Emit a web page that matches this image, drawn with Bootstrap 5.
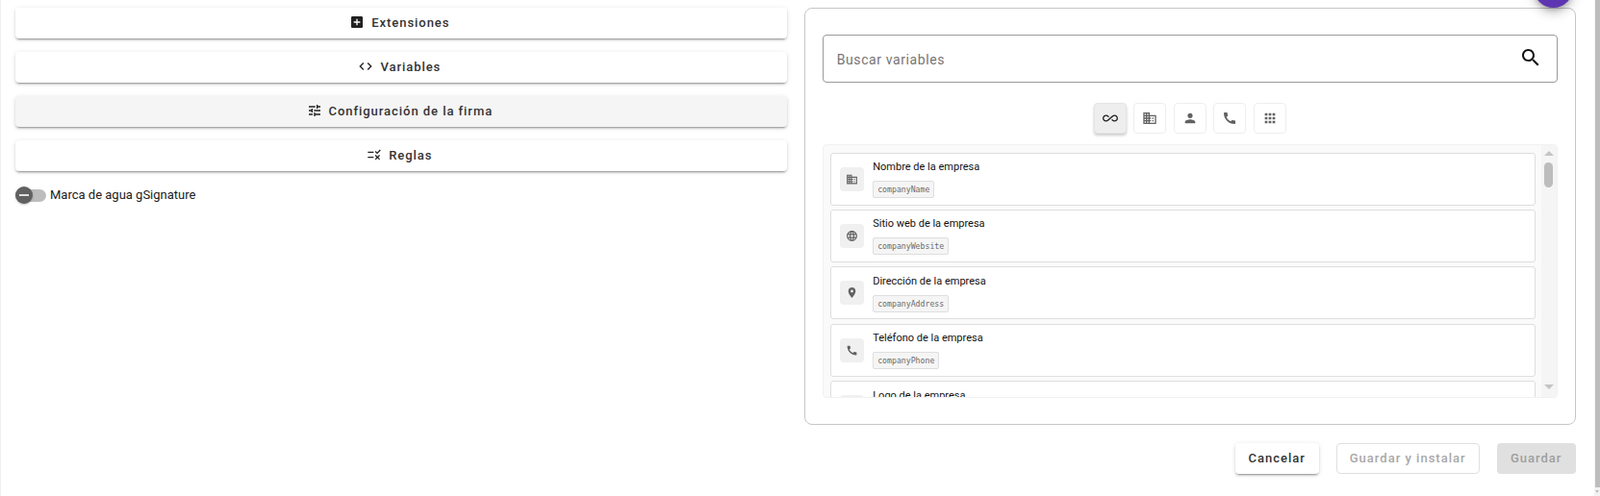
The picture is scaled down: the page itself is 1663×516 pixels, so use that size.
<!DOCTYPE html>
<html lang="es">
<head>
<meta charset="utf-8">
<title>Firma</title>
<link href="https://cdn.jsdelivr.net/npm/bootstrap@5.3.0/dist/css/bootstrap.min.css" rel="stylesheet">
<style>
html,body{height:516px;overflow:hidden;background:#fff;font-family:Roboto,"Liberation Sans",sans-serif;color:#212121}
.page-wrap{height:516px;position:relative;border-left:1px solid #f0f0f0}
.page-main{width:1655.7px;padding:8px 19px 0 15px;gap:18px}
.left-col{width:802px}
.right-col{width:802px}
.acc-btn{height:32px;margin-bottom:14px;width:100%;background:#fff;border:0;border-radius:4px;font-size:13px;font-weight:500;letter-spacing:.95px;color:#333;padding:0 3px 1px 0;box-shadow:0 3px 1px -2px rgba(0,0,0,.2),0 2px 2px 0 rgba(0,0,0,.14),0 1px 5px 0 rgba(0,0,0,.12)}
.acc-btn.is-active{background:#f5f5f5}
.acc-btn svg{width:16px;height:16px;fill:#212121;margin-right:7px;vertical-align:-3px}
.wm-row{margin-top:-2px;height:26px;gap:4px;font-size:13px;color:#212121}
.wm-switch{width:32px;height:13px;background:#bdbdbd;border-radius:7px;position:relative}
.wm-knob{position:absolute;left:0;top:-3px;width:18px;height:18px;border-radius:50%;background:#616161;box-shadow:0 1px 2px rgba(0,0,0,.25)}
.wm-knob::after{content:"";position:absolute;left:4px;top:8px;width:10px;height:2px;background:#e0e0e0}
.vars-panel{height:434px;border:1px solid #c6c6c6;border-radius:8px;padding:27px 18px 0 18.5px;background:#fff}
.search-box{height:50px;border:1px solid #9a9a9a;border-radius:4px;padding:0 14px 0 13.5px}
.search-box input{border:0;outline:0;flex:1;font-size:14px;letter-spacing:.6px;color:#212121;background:transparent;padding:2px 0 0;box-shadow:none}
.search-box input::placeholder{color:#757575;opacity:1}
.search-box svg{width:24px;height:24px;fill:#111;margin-right:1px;margin-top:-3px}
.type-row{margin-top:21px;gap:7.5px}
.type-btn{width:34px;height:32px;border:1px solid #eee;border-radius:4px;background:#fff;padding:0}
.type-btn svg{width:16px;height:16px;fill:#616161}
.type-btn.is-on{background:#eee;border-color:#e4e4e4;box-shadow:0 2px 3px rgba(0,0,0,.2)}
.type-btn.is-on svg{fill:#212121;width:16px;height:16px}
.var-list{margin-top:11px;height:264px;background:#fafafa;border:1px solid #f1f1f1;border-radius:4px;overflow:hidden}
.var-scroll{flex:1;padding:7.5px 7px 0 7px;overflow:hidden}
.var-item{height:55px;margin-bottom:4.4px;background:#fff;border:1px solid #dedede;border-radius:3px;padding:0 9px;gap:9px;width:732.5px}
.var-ico{width:25px;height:25px;border-radius:4px;background:#f0f0f0;flex:none}
.var-ico svg{width:13px;height:13px;fill:#616161}
.var-name{font-size:11px;line-height:14px;color:#111;margin-bottom:2px;margin-top:2px}
.var-key{display:inline-block;height:18px;line-height:16px;padding:0 4px;border:1px solid #dedede;border-radius:2px;background:#f5f5f5;color:#6b6b6b;font-family:"DejaVu Sans Mono","Liberation Mono",monospace;font-size:8.2px}
.list-bar{width:15.5px;background:#f5f5f5;flex:none;padding:6px 0 8px}
.bar-up{width:0;height:0;border-left:5px solid transparent;border-right:5px solid transparent;border-bottom:5px solid #c4c4c4}
.bar-thumb{width:9px;height:26px;background:#bdbdbd;border-radius:5px;margin-top:7px}
.bar-down{width:0;height:0;border-left:5px solid transparent;border-right:5px solid transparent;border-top:5px solid #c4c4c4;margin-top:auto}
.act-row{margin-top:18.5px;gap:18px}
.act-btn{height:32px;font-size:13px;font-weight:500;letter-spacing:1px;border-radius:4px;padding:0;border:0}
.act-cancel{width:87px;background:#fff;color:#333;box-shadow:0 3px 1px -2px rgba(0,0,0,.2),0 2px 2px 0 rgba(0,0,0,.14),0 1px 5px 0 rgba(0,0,0,.12)}
.act-outline{width:149px;background:#fff;color:#a8a8a8;border:1px solid #e0e0e0}
.act-fill{width:82px;background:#e0e0e0;color:#9e9e9e}
.fab-top{position:absolute;left:1593px;top:-33px;width:41px;height:41px;border-radius:50%;background:#5e35b1;box-shadow:0 3px 5px -1px rgba(0,0,0,.2),0 6px 10px 0 rgba(0,0,0,.14),0 1px 18px 0 rgba(0,0,0,.12)}
.page-bar{width:6.3px;background:#f3f3f3;flex:none;padding-left:1.3px}
.page-thumb{height:507px;background:#bdbdbd}
.page-arrow{width:0;height:0;border-left:2.5px solid transparent;border-right:2.5px solid transparent;border-top:3px solid #bdbdbd;margin-top:3px}
</style>
</head>
<body>
<svg width="0" height="0" class="d-none">
<symbol id="i-add" viewBox="0 0 24 24"><path d="M19 3H5c-1.11 0-2 .9-2 2v14c0 1.1.89 2 2 2h14c1.1 0 2-.9 2-2V5c0-1.1-.9-2-2-2zm-2 10h-4v4h-2v-4H7v-2h4V7h2v4h4v2z"/></symbol>
<symbol id="i-code" viewBox="0 0 24 24"><path d="M9.4 16.6L4.8 12l4.6-4.6L8 6l-6 6 6 6 1.4-1.4zm5.2 0l4.6-4.6-4.6-4.6L16 6l6 6-6 6-1.4-1.4z"/></symbol>
<symbol id="i-tune" viewBox="0 0 24 24"><path d="M3 17v2h6v-2H3zM3 5v2h10V5H3zm10 16v-2h8v-2h-8v-2h-2v6h2zM7 9v2H3v2h4v2h2V9H7zm14 4v-2H11v2h10zm-6-4h2V7h4V5h-4V3h-2v6z"/></symbol>
<symbol id="i-rule" viewBox="0 0 24 24"><path d="M16.54 11L13 7.46l1.41-1.41 2.12 2.12 4.24-4.24 1.41 1.41L16.54 11zM11 7H2v2h9V7zm10 6.41L19.59 12 17 14.59 14.41 12 13 13.41 15.59 16 13 18.59 14.41 20 17 17.41 19.59 20 21 18.59 18.41 16 21 13.41zM11 15H2v2h9v-2z"/></symbol>
<symbol id="i-search" viewBox="0 0 24 24"><path d="M15.5 14h-.79l-.28-.27C15.41 12.59 16 11.11 16 9.5 16 5.91 13.09 3 9.5 3S3 5.91 3 9.5 5.91 16 9.5 16c1.61 0 3.09-.59 4.23-1.57l.27.28v.79l5 4.99L20.49 19l-4.99-5zm-6 0C7.01 14 5 11.99 5 9.5S7.01 5 9.5 5 14 7.01 14 9.5 11.99 14 9.5 14z"/></symbol>
<symbol id="i-inf" viewBox="0 0 24 24"><path d="M18.6 6.62c-1.44 0-2.8.56-3.77 1.53L12 10.66 10.48 12h.01L7.8 14.39c-.64.64-1.49.99-2.4.99-1.87 0-3.39-1.51-3.39-3.38S3.53 8.62 5.4 8.62c.91 0 1.76.35 2.44 1.03l1.13 1 1.51-1.34L9.22 8.2C8.2 7.18 6.84 6.62 5.4 6.62 2.42 6.62 0 9.04 0 12s2.42 5.38 5.4 5.38c1.44 0 2.8-.56 3.77-1.53l2.83-2.5.01.01L13.52 12h-.01l2.69-2.39c.64-.64 1.49-.99 2.4-.99 1.87 0 3.39 1.51 3.39 3.38s-1.52 3.38-3.39 3.38c-.9 0-1.76-.35-2.44-1.03l-1.14-1.01-1.51 1.34 1.27 1.12c1.02 1.01 2.37 1.57 3.82 1.57 2.98 0 5.4-2.41 5.4-5.38s-2.42-5.37-5.4-5.37z"/></symbol>
<symbol id="i-domain" viewBox="0 0 24 24"><path d="M12 7V3H2v18h20V7H12zM6 19H4v-2h2v2zm0-4H4v-2h2v2zm0-4H4V9h2v2zm0-4H4V5h2v2zm4 12H8v-2h2v2zm0-4H8v-2h2v2zm0-4H8V9h2v2zm0-4H8V5h2v2zm10 12h-8v-2h2v-2h-2v-2h2v-2h-2V9h8v10zm-2-8h-2v2h2v-2zm0 4h-2v2h2v-2z"/></symbol>
<symbol id="i-person" viewBox="0 0 24 24"><path d="M12 12c2.21 0 4-1.79 4-4s-1.79-4-4-4-4 1.79-4 4 1.79 4 4 4zm0 2c-2.67 0-8 1.34-8 4v2h16v-2c0-2.66-5.33-4-8-4z"/></symbol>
<symbol id="i-call" viewBox="0 0 24 24"><path d="M20.01 15.38c-1.23 0-2.42-.2-3.53-.56-.35-.12-.74-.03-1.01.24l-1.57 1.97c-2.83-1.35-5.48-3.9-6.89-6.83l1.95-1.66c.27-.28.35-.67.24-1.02-.37-1.11-.56-2.3-.56-3.53 0-.54-.45-.99-.99-.99H4.19C3.65 3 3 3.24 3 3.99 3 13.28 10.73 21 20.01 21c.71 0 .99-.63.99-1.18v-3.45c0-.54-.45-.99-.99-.99z"/></symbol>
<symbol id="i-apps" viewBox="0 0 24 24"><path d="M4 8h4V4H4v4zm6 12h4v-4h-4v4zm-6 0h4v-4H4v4zm0-6h4v-4H4v4zm6 0h4v-4h-4v4zm6-10v4h4V4h-4zm-6 4h4V4h-4v4zm6 6h4v-4h-4v4zm0 6h4v-4h-4v4z"/></symbol>
<symbol id="i-public" viewBox="0 0 24 24"><path d="M11.99 2C6.47 2 2 6.48 2 12s4.47 10 9.99 10C17.52 22 22 17.52 22 12S17.52 2 11.99 2zm6.93 6h-2.95c-.32-1.25-.78-2.45-1.38-3.56 1.84.63 3.37 1.91 4.33 3.56zM12 4.04c.83 1.2 1.48 2.53 1.91 3.96h-3.82c.43-1.43 1.08-2.76 1.91-3.96zM4.26 14C4.1 13.36 4 12.69 4 12s.1-1.36.26-2h3.38c-.08.66-.14 1.32-.14 2 0 .68.06 1.34.14 2H4.26zm.82 2h2.95c.32 1.25.78 2.45 1.38 3.56-1.84-.63-3.37-1.9-4.33-3.56zm2.95-8H5.08c.96-1.66 2.49-2.93 4.33-3.56C8.81 5.55 8.35 6.75 8.03 8zM12 19.96c-.83-1.2-1.48-2.53-1.91-3.96h3.82c-.43 1.43-1.08 2.76-1.91 3.96zM14.34 14H9.66c-.09-.66-.16-1.32-.16-2 0-.68.07-1.35.16-2h4.68c.09.65.16 1.32.16 2 0 .68-.07 1.34-.16 2zm.25 5.56c.6-1.11 1.06-2.31 1.38-3.56h2.95c-.96 1.65-2.49 2.93-4.33 3.56zM16.36 14c.08-.66.14-1.32.14-2 0-.68-.06-1.34-.14-2h3.38c.16.64.26 1.31.26 2s-.1 1.36-.26 2h-3.38z"/></symbol>
<symbol id="i-pin" viewBox="0 0 24 24"><path d="M12 2C8.13 2 5 5.13 5 9c0 5.25 7 13 7 13s7-7.75 7-13c0-3.87-3.13-7-7-7zm0 9.5c-1.38 0-2.5-1.12-2.5-2.5s1.12-2.5 2.5-2.5 2.5 1.12 2.5 2.5-1.12 2.5-2.5 2.5z"/></symbol>
</svg>
<div class="page-wrap d-flex">
  <div class="page-main d-flex align-items-start">
    <div class="left-col">
      <button class="acc-btn btn" type="button"><svg><use href="#i-add"/></svg>Extensiones</button>
      <button class="acc-btn btn" type="button"><svg><use href="#i-code"/></svg>Variables</button>
      <button class="acc-btn btn is-active" type="button"><svg><use href="#i-tune"/></svg>Configuración de la firma</button>
      <button class="acc-btn btn" type="button"><svg><use href="#i-rule"/></svg>Reglas</button>
      <div class="wm-row d-flex align-items-center">
        <div class="wm-switch"><div class="wm-knob"></div></div>
        <span>Marca de agua gSignature</span>
      </div>
    </div>
    <div class="right-col">
      <div class="vars-panel">
        <div class="search-box d-flex align-items-center">
          <input type="text" class="form-control" placeholder="Buscar variables">
          <svg><use href="#i-search"/></svg>
        </div>
        <div class="type-row d-flex justify-content-center">
          <button class="type-btn is-on d-flex align-items-center justify-content-center" type="button"><svg><use href="#i-inf"/></svg></button>
          <button class="type-btn d-flex align-items-center justify-content-center" type="button"><svg><use href="#i-domain"/></svg></button>
          <button class="type-btn d-flex align-items-center justify-content-center" type="button"><svg><use href="#i-person"/></svg></button>
          <button class="type-btn d-flex align-items-center justify-content-center" type="button"><svg><use href="#i-call"/></svg></button>
          <button class="type-btn d-flex align-items-center justify-content-center" type="button"><svg><use href="#i-apps"/></svg></button>
        </div>
        <div class="var-list d-flex">
          <div class="var-scroll">
            <div class="var-item d-flex align-items-center">
              <div class="var-ico d-flex align-items-center justify-content-center"><svg><use href="#i-domain"/></svg></div>
              <div><div class="var-name">Nombre de la empresa</div><span class="var-key">companyName</span></div>
            </div>
            <div class="var-item d-flex align-items-center">
              <div class="var-ico d-flex align-items-center justify-content-center"><svg><use href="#i-public"/></svg></div>
              <div><div class="var-name">Sitio web de la empresa</div><span class="var-key">companyWebsite</span></div>
            </div>
            <div class="var-item d-flex align-items-center">
              <div class="var-ico d-flex align-items-center justify-content-center"><svg><use href="#i-pin"/></svg></div>
              <div><div class="var-name">Dirección de la empresa</div><span class="var-key">companyAddress</span></div>
            </div>
            <div class="var-item d-flex align-items-center">
              <div class="var-ico d-flex align-items-center justify-content-center"><svg><use href="#i-call"/></svg></div>
              <div><div class="var-name">Teléfono de la empresa</div><span class="var-key">companyPhone</span></div>
            </div>
            <div class="var-item d-flex align-items-center">
              <div class="var-ico d-flex align-items-center justify-content-center"><svg><use href="#i-add"/></svg></div>
              <div><div class="var-name">Logo de la empresa</div><span class="var-key">companyLogo</span></div>
            </div>
          </div>
          <div class="list-bar d-flex flex-column align-items-center">
            <div class="bar-up"></div>
            <div class="bar-thumb"></div>
            <div class="bar-down"></div>
          </div>
        </div>
      </div>
      <div class="act-row d-flex justify-content-end">
        <button class="act-btn btn act-cancel" type="button">Cancelar</button>
        <button class="act-btn btn act-outline" type="button">Guardar y instalar</button>
        <button class="act-btn btn act-fill" type="button">Guardar</button>
      </div>
    </div>
  </div>
  <div class="fab-top"></div>
  <div class="page-bar ms-auto">
    <div class="page-thumb"></div>
    <div class="page-arrow"></div>
  </div>
</div>
<script src="https://cdn.jsdelivr.net/npm/bootstrap@5.3.0/dist/js/bootstrap.bundle.min.js"></script>
</body>
</html>
